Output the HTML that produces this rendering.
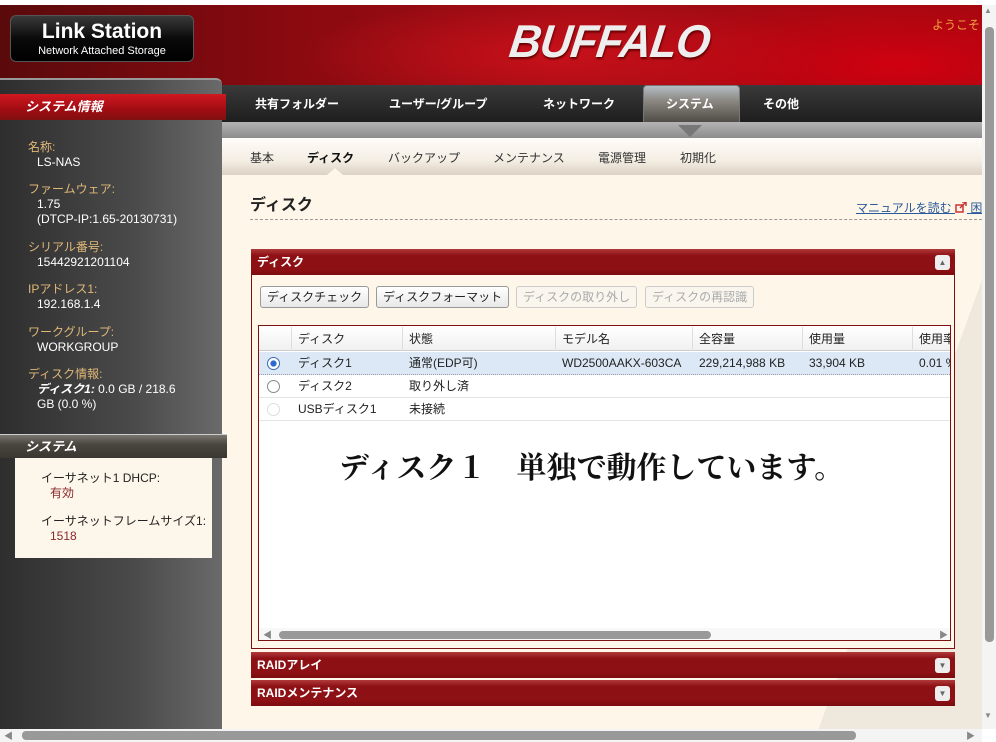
<!DOCTYPE html>
<html><head><meta charset="utf-8"><style>
*{margin:0;padding:0;box-sizing:border-box}
body{width:996px;height:742px;overflow:hidden;background:#fff;font-family:"Liberation Sans","Noto Sans CJK JP",sans-serif;font-size:12px;position:relative}
.abs{position:absolute}
#hdr{left:0;top:5px;width:982px;height:80px;background:radial-gradient(ellipse 260px 60px at 560px 50px,#c8101a,transparent),radial-gradient(ellipse 300px 80px at 900px 60px,#d00010,transparent),linear-gradient(90deg,#5a0a0c,#8a0a10 30%,#a00c14 60%,#9a0a10);}
#logo{left:10px;top:15px;width:184px;height:47px;background:linear-gradient(#3a3a3a,#0a0a0a 50%,#000);border-radius:6px;border:1px solid #555;color:#fff;text-align:center}
#logo b{display:block;font-size:21px;line-height:24px;margin-top:4px}
#logo span{display:block;font-size:11px;line-height:14px}
#buf{left:510px;top:14px;font-size:46px;font-weight:bold;font-style:italic;color:#eee;letter-spacing:-1px;text-shadow:1px 2px 2px #600;transform:scaleX(0.95) skewX(-8deg);transform-origin:left;font-family:"Liberation Sans",sans-serif}
#welcome{left:932px;top:16px;color:#f0a040;font-size:12px}
#side{left:0;top:78px;width:222px;height:651px;background:linear-gradient(90deg,#2e2e2e,#4a4a4a 60%,#6a6a6a);border-top-right-radius:6px;border-top:2px solid #999}
#side .bar{position:absolute;left:0;top:14px;width:226px;height:26px;background:linear-gradient(#d01820,#a00c12 60%,#801010);color:#fff;font-weight:bold;font-style:italic;font-size:13px;line-height:26px;padding-left:25px}
.si{position:absolute;left:28px;line-height:15px;font-size:12px;white-space:nowrap}
.si .l{color:#e0b878}.si .v{color:#fff;padding-left:9px}
#sys{left:0;top:434px;width:227px;height:24px;background:linear-gradient(#7a7670,#4a4640 40%,#3a3630);color:#fff;font-weight:bold;font-style:italic;font-size:13px;line-height:24px;padding-left:25px;border-top:1px solid #ccc}
#sysb{left:15px;top:458px;width:197px;height:100px;background:#fdf6ea;color:#222;font-size:12px;line-height:15px;padding:13px 0 0 26px;white-space:nowrap}
#sysb .v{color:#8a2a2a;padding-left:9px;margin-bottom:13px}
#nav{left:222px;top:85px;width:760px;height:37px;background:linear-gradient(#3a3a3a,#1e1e1e)}
.n{position:absolute;top:95px;color:#fff;font-weight:bold;font-size:12px}
#act{left:643px;top:85px;width:97px;height:40px;background:linear-gradient(#b4bcc4,#8a8680 40%,#4a4640);border-radius:4px;border:1px solid #777}
#band{left:222px;top:122px;width:760px;height:16px;background:linear-gradient(#b4b4b4,#8c8c8c)}
#sub{left:222px;top:138px;width:760px;height:37px;background:linear-gradient(#fffdf8,#f4eee4 60%,#ddd2c4)}
.s{position:absolute;top:149px;color:#333;font-size:12px}
#main{left:222px;top:175px;width:760px;height:554px;background:#fdf6e9}
#diag{left:600px;top:175px;width:382px;height:554px;background:linear-gradient(110deg,transparent 72%,#efe8dc 72%)}
#title{left:250px;top:191px;font-size:16px;font-weight:bold;color:#222}
#dash{left:250px;top:219px;width:732px;border-top:1px dashed #999}
#man{left:856px;top:199px;color:#2a5a9a;text-decoration:underline;font-size:12px;white-space:nowrap}
#panel{left:251px;top:249px;width:704px;height:400px;border:1px solid #7a1010;background:#fdf6e9}
.ph{position:absolute;left:251px;width:704px;height:26px;background:linear-gradient(#b03a3a,#8c1014 25%,#8c1014 80%,#7a0c10);color:#fff;font-weight:bold;font-size:12px;line-height:26px;padding-left:6px}
.tg{position:absolute;right:5px;top:6px;width:15px;height:15px;background:#eee;border-radius:3px;color:#666;font-size:8px;line-height:15px;text-align:center}
.btn{position:absolute;top:286px;height:22px;border:1px solid #999;border-radius:3px;background:linear-gradient(#fff,#e8e8e8);font-size:12px;line-height:20px;padding:0 6px;color:#222;white-space:nowrap}
.btn.d{color:#aaa;border-color:#ccc;background:#faf6ee}
#tbl{left:258px;top:325px;width:693px;height:316px;border:1px solid #7a1010;background:#fff;overflow:hidden}
.row{position:absolute;left:0;width:693px;height:23px;border-bottom:1px solid #e4e4e4;font-size:12px;line-height:23px;color:#222;white-space:nowrap}
.row span{position:absolute;white-space:nowrap}
.rad{position:absolute;left:8px;top:5px;width:13px;height:13px;border-radius:50%;border:1px solid #888;background:#fff}
#big{left:245px;top:443px;width:693px;text-align:center;font-family:"Liberation Serif","Noto Serif CJK JP",serif;font-weight:bold;font-size:30px;color:#111;white-space:nowrap}
#vs{left:982px;top:5px;width:14px;height:724px;background:#f4f4f4}
#hs{left:0;top:729px;width:982px;height:13px;background:#f4f4f4}
</style></head><body>
<div class="abs" id="hdr"></div>
<div class="abs" id="logo"><b>Link Station</b><span>Network Attached Storage</span></div>
<div class="abs" id="buf">BUFFALO</div>
<div class="abs" id="welcome">ようこそ</div>
<div class="abs" id="nav"></div>
<div class="abs" id="act"></div>
<div class="n" style="left:255px">共有フォルダー</div>
<div class="n" style="left:389px">ユーザー/グループ</div>
<div class="n" style="left:543px">ネットワーク</div>
<div class="n" style="left:666px">システム</div>
<div class="n" style="left:763px">その他</div>
<div class="abs" id="band"></div>
<div class="abs" id="sub"></div>
<div class="abs" style="left:678px;top:125px;width:0;height:0;border-left:12px solid transparent;border-right:12px solid transparent;border-top:12px solid #777"></div>
<div class="abs" style="left:327px;top:168px;width:0;height:0;border-left:8px solid transparent;border-right:8px solid transparent;border-bottom:7px solid #fdf6e9"></div>
<div class="s" style="left:250px">基本</div>
<div class="s" style="left:307px;font-weight:bold;color:#111">ディスク</div>
<div class="s" style="left:388px">バックアップ</div>
<div class="s" style="left:493px">メンテナンス</div>
<div class="s" style="left:598px">電源管理</div>
<div class="s" style="left:680px">初期化</div>
<div class="abs" id="main"></div>
<div class="abs" id="diag"></div>
<div class="abs" id="side"><div class="bar">システム情報</div></div>
<div class="si" style="top:140px"><div class="l">名称:</div><div class="v">LS-NAS</div></div>
<div class="si" style="top:182px"><div class="l">ファームウェア:</div><div class="v">1.75</div><div class="v">(DTCP-IP:1.65-20130731)</div></div>
<div class="si" style="top:240px"><div class="l">シリアル番号:</div><div class="v">15442921201104</div></div>
<div class="si" style="top:282px"><div class="l">IPアドレス1:</div><div class="v">192.168.1.4</div></div>
<div class="si" style="top:325px"><div class="l">ワークグループ:</div><div class="v">WORKGROUP</div></div>
<div class="si" style="top:367px"><div class="l">ディスク情報:</div><div class="v"><b style="font-style:italic">ディスク1:</b> 0.0 GB / 218.6</div><div class="v">GB (0.0 %)</div></div>
<div class="abs" id="sys">システム</div>
<div class="abs" id="sysb">イーサネット1 DHCP:<div class="v">有効</div>イーサネットフレームサイズ1:<div class="v">1518</div></div>
<div class="abs" id="title">ディスク</div>
<div class="abs" id="dash"></div>
<div class="abs" id="man">マニュアルを読む <svg width="12" height="11" viewBox="0 0 12 11" style="vertical-align:-1px"><rect x="1" y="3" width="7" height="7" fill="none" stroke="#c33" stroke-width="1.5"/><path d="M5 6L11 0M7 0h4v4" fill="none" stroke="#c33" stroke-width="1.5"/></svg> 困</div>
<div class="abs" id="panel"></div>
<div class="ph" style="top:249px">ディスク<div class="tg">▲</div></div>
<div class="btn" style="left:260px">ディスクチェック</div>
<div class="btn" style="left:376px">ディスクフォーマット</div>
<div class="btn d" style="left:516px">ディスクの取り外し</div>
<div class="btn d" style="left:645px">ディスクの再認識</div>
<div class="abs" id="tbl">
<div class="row" style="top:1px;height:24px;background:linear-gradient(#fff,#f0f0f0);border-bottom:1px solid #ccc;line-height:24px"><span style="left:32px;border-left:1px solid #ddd;padding-left:6px">ディスク</span><span style="left:143px;border-left:1px solid #ddd;padding-left:6px">状態</span><span style="left:296px;border-left:1px solid #ddd;padding-left:6px">モデル名</span><span style="left:433px;border-left:1px solid #ddd;padding-left:6px">全容量</span><span style="left:543px;border-left:1px solid #ddd;padding-left:6px">使用量</span><span style="left:653px;border-left:1px solid #ddd;padding-left:6px">使用率</span></div>
<div class="row" style="top:26px;background:#dce8f6;border-bottom:1px dotted #99a"><div class="rad" style="border-color:#3a6ab0;background:radial-gradient(#2a6ad0 35%,#fff 45%)"></div><span style="left:39px">ディスク1</span><span style="left:150px">通常(EDP可)</span><span style="left:303px">WD2500AAKX-603CA</span><span style="left:440px">229,214,988 KB</span><span style="left:550px">33,904 KB</span><span style="left:660px">0.01 %</span></div>
<div class="row" style="top:49px"><div class="rad"></div><span style="left:39px">ディスク2</span><span style="left:150px">取り外し済</span></div>
<div class="row" style="top:72px"><div class="rad" style="border-color:#ddd"></div><span style="left:39px">USBディスク1</span><span style="left:150px">未接続</span></div>
<div style="position:absolute;left:0;top:302px;width:693px;height:14px;background:#f8f8f8"></div>
<div style="position:absolute;left:20px;top:305px;width:432px;height:8px;border-radius:4px;background:#999"></div>
<div style="position:absolute;left:4px;top:302px;font-size:9px;color:#888">◀</div>
<div style="position:absolute;left:680px;top:302px;font-size:9px;color:#888">▶</div>
</div>
<div class="abs" id="big">ディスク１　単独で動作しています。</div>
<div class="ph" style="top:652px;height:26px">RAIDアレイ<div class="tg">▼</div></div>
<div class="ph" style="top:680px;height:26px">RAIDメンテナンス<div class="tg">▼</div></div>
<div class="abs" id="vs"><div style="position:absolute;left:3px;top:22px;width:9px;height:615px;border-radius:4px;background:#999"></div><div style="position:absolute;left:2px;top:1px;font-size:8px;color:#888">▲</div><div style="position:absolute;left:2px;top:706px;font-size:8px;color:#888">▼</div></div>
<div class="abs" id="hs"><div style="position:absolute;left:22px;top:2px;height:9px;border-radius:4px;background:#999;width:834px"></div><div style="position:absolute;left:4px;top:0;font-size:9px;color:#888">◀</div><div style="position:absolute;left:966px;top:0;font-size:9px;color:#888">▶</div></div>
</body></html>
